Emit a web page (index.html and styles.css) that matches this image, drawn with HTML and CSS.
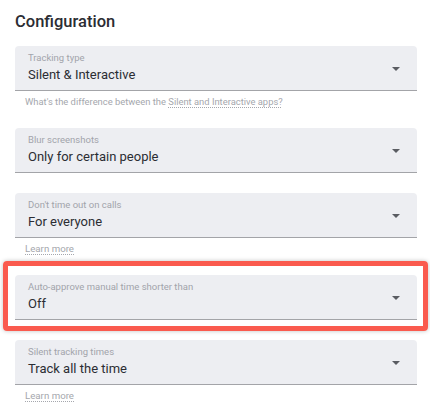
FILE: index.html
```html
<!DOCTYPE html>
<html>
<head>
<meta charset="utf-8">
<link rel="stylesheet" href="styles.css">
</head>
<body>
<div class="page">
  <h1 class="title">Configuration</h1>

  <div class="group">
    <div class="field">
      <div class="texts">
        <div class="label">Tracking type</div>
        <div class="value">Silent &amp; Interactive</div>
      </div>
      <svg class="arrow" width="8" height="4" viewBox="0 0 10 5"><path d="M0 0 L10 0 L5 5 Z" fill="#5a5c62"/></svg>
    </div>
    <div class="helper helper-long">What's the difference between the <span class="link">Silent and Interactive apps?</span></div>
  </div>

  <div class="group">
    <div class="field">
      <div class="texts">
        <div class="label">Blur screenshots</div>
        <div class="value">Only for certain people</div>
      </div>
      <svg class="arrow" width="8" height="4" viewBox="0 0 10 5"><path d="M0 0 L10 0 L5 5 Z" fill="#5a5c62"/></svg>
    </div>
  </div>

  <div class="group">
    <div class="field">
      <div class="texts">
        <div class="label">Don't time out on calls</div>
        <div class="value">For everyone</div>
      </div>
      <svg class="arrow" width="8" height="4" viewBox="0 0 10 5"><path d="M0 0 L10 0 L5 5 Z" fill="#5a5c62"/></svg>
    </div>
    <div class="helper"><span class="link">Learn more</span></div>
  </div>

  <div class="group">
    <div class="field highlighted">
      <div class="texts">
        <div class="label">Auto-approve manual time shorter than</div>
        <div class="value">Off</div>
      </div>
      <svg class="arrow" width="8" height="4" viewBox="0 0 10 5"><path d="M0 0 L10 0 L5 5 Z" fill="#5a5c62"/></svg>
    </div>
  </div>

  <div class="group">
    <div class="field">
      <div class="texts">
        <div class="label">Silent tracking times</div>
        <div class="value">Track all the time</div>
      </div>
      <svg class="arrow" width="8" height="4" viewBox="0 0 10 5"><path d="M0 0 L10 0 L5 5 Z" fill="#5a5c62"/></svg>
    </div>
    <div class="helper"><span class="link">Learn more</span></div>
  </div>
</div>
</body>
</html>
```

FILE: styles.css
```css
html, body {
  margin: 0;
  padding: 0;
  background: #ffffff;
}
body {
  font-family: Roboto, "Liberation Sans", Arial, sans-serif;
  color: #2b2d33;
}
.page {
  padding: 11px 13px 0 15px;
  display: flex;
  flex-direction: column;
}
.title {
  margin: 0 0 13px 0;
  font-size: 16.5px;
  line-height: 22px;
  font-weight: 500;
  color: #2b2d33;
}
.group {
  display: flex;
  flex-direction: column;
  margin-bottom: 20px;
}
.field {
  position: relative;
  display: flex;
  align-items: center;
  background: #edeef2;
  border-radius: 4px 4px 0 0;
  border-bottom: 1px solid #a3a4a8;
  padding: 5px 17px 5px 13px;
}
.texts {
  flex: 1;
  display: flex;
  flex-direction: column;
}
.label {
  font-size: 9.5px;
  line-height: 14px;
  color: #a2a4ab;
}
.value {
  font-size: 13px;
  line-height: 20px;
  color: #2b2d33;
}
.arrow {
  display: block;
  margin-top: 1px;
}
.helper {
  padding: 4px 0 0 10px;
  font-size: 9.7px;
  line-height: 13px;
  color: #a5a7ad;
}
.helper-long {
  font-size: 9.4px;
}
.link {
  text-decoration: underline dotted;
  text-underline-offset: 2px;
}
.highlighted::after {
  content: "";
  position: absolute;
  left: -12px;
  right: -11px;
  top: -14px;
  bottom: -12px;
  border: 5px solid #fa5a4e;
  border-radius: 4px;
  box-shadow: 0 0 4px rgba(0, 0, 0, 0.25);
  pointer-events: none;
}
```
